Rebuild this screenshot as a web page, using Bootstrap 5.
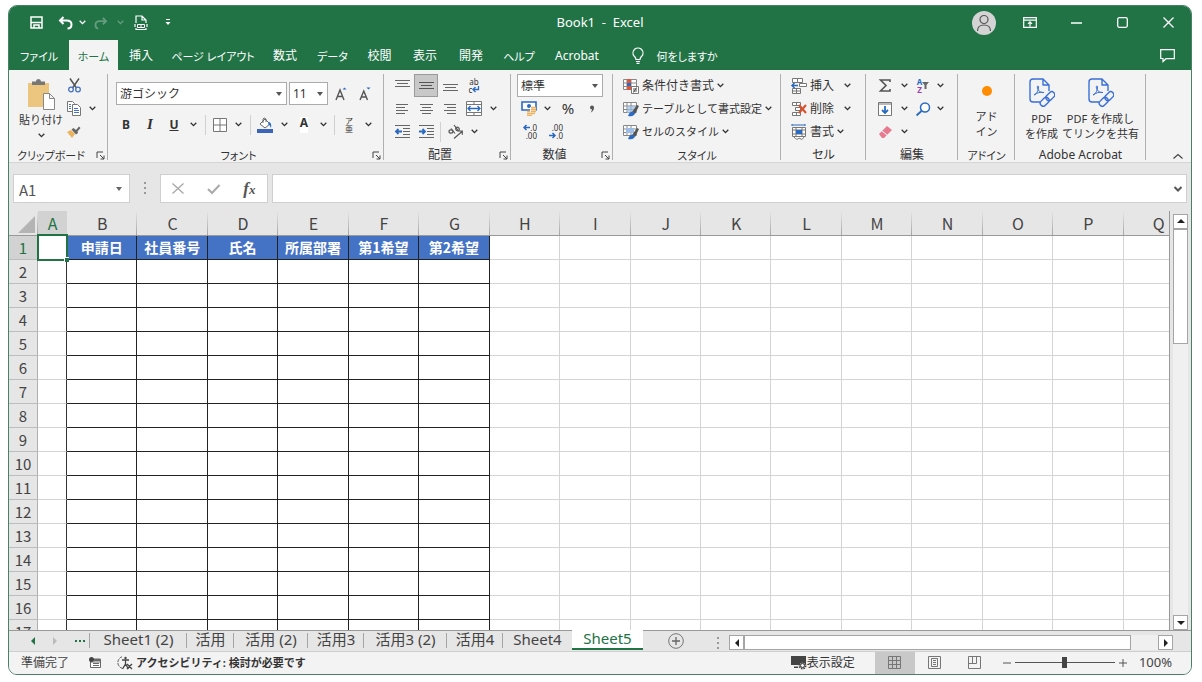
<!DOCTYPE html>
<html lang="ja">
<head>
<meta charset="utf-8">
<meta name="viewport" content="width=device-width, initial-scale=1">
<title>Book1 - Excel</title>
<link href="https://cdn.jsdelivr.net/npm/bootstrap@5.3.0/dist/css/bootstrap.min.css" rel="stylesheet">
<style>
:root{--green:#217346;--ink:#444;--line:#ababab}
body{font-family:"Noto Sans","Noto Sans CJK JP",sans-serif;font-size:12px;line-height:1;color:#333;font-feature-settings:"palt";padding:5px 10px 7px 8px;background:#fff}
svg{display:block;flex:none;overflow:visible}
.btn{--bs-btn-padding-x:0;--bs-btn-padding-y:0;--bs-btn-border-width:0;--bs-btn-border-radius:0;--bs-btn-font-size:12px;--bs-btn-line-height:1;--bs-btn-color:#333;display:flex;align-items:center;justify-content:center;white-space:nowrap}
.kana,.btn.kana{font-size:11px}
.app{border:1px solid #4a8068;border-radius:9px;background:#e6e6e6;overflow:hidden}
.app-head{background:var(--green);margin:-1px -1px 0;padding:0 1px;color:#fff}
.app-head .btn{--bs-btn-color:#fff;--bs-btn-hover-color:#fff}
.title-row{display:grid;grid-template-columns:1fr auto 1fr;height:35px}
.title-text{font-size:13px}
.quick{display:grid;grid-template-columns:38px 20px 14px 24px 14px 28px 26px;padding-left:8px}
.win-ctl{display:grid;grid-template-columns:46px 46px 46px 46px 46px;justify-content:end}
.avatar{width:24px;height:24px;background:#d4d4d4;border-radius:50%}
.ribbon-tabs{display:grid;grid-template-columns:60px 49px 46px 98px 46px 49px 45px 46px 46px 50px 66px 130px 1fr;height:30px}
.ribbon-tabs a{display:flex;align-items:center;justify-content:center;color:#fff;text-decoration:none;white-space:nowrap;padding:2px 0 0}
.ribbon-tabs a.active{background:#f3f3f3;color:var(--green)}
.ribbon{display:grid;grid-template-columns:99px 276px 127px 102px 168px 85px 92px 57px 131px 1fr;height:93px;background:#f3f3f3;border-bottom:1px solid #d5d5d5;padding-top:4px}
.group{display:flex;flex-direction:column;position:relative;min-width:0}
.group::after{content:"";position:absolute;right:0;top:0;bottom:3px;width:1px;background:#b0b0b0}
.group-body{height:69px}
.inset{padding-left:6px}
.inset-lg{padding-left:10px}
.group-foot{display:flex;align-items:center;height:20px;padding-top:4px;white-space:nowrap}
.group-foot span{flex:1;text-align:center}
.group-foot .btn{width:15px;height:14px}
.r3{display:grid;grid-auto-rows:23px;align-items:center}
.r3 .btn,.fmt .btn{height:23px}
.cmd{justify-content:start;gap:3px}
.bar{width:1px;height:20px;background:#d0d0d0;justify-self:center}
.fmt{display:grid;grid-template-columns:24px 24px 24px 14px 10px 20px 16px 8px 22px 16px 24px 14px 8px 22px 16px;align-items:center}
.al{grid-template-columns:24px 24px 24px 24px 14px}
.al3{display:grid;grid-template-columns:24px 24px 5px 25px 12px;grid-column:1/-1;align-items:center}
.nu{grid-template-columns:24px 12px 30px 18px}
.ed{grid-template-columns:22px 16px 22px 12px}
.ce{grid-template-columns:46px 20px}
.on{background:#c8c8c8;border:1px solid #9a9a9a!important}
.tiny{font-size:8px;line-height:8px}
.serif-i{font:italic bold 15px "Liberation Serif",serif}
.fx{font:italic bold 17px "Liberation Serif",serif;color:#555}
.fx i{font-size:13px}
.pick{-webkit-appearance:none;appearance:none;border:1px solid var(--line);border-radius:0;height:23px;padding:0 12px 0 3px;font-size:12px;line-height:1;color:#333;background:#fff url("data:image/svg+xml,%3Csvg xmlns='http://www.w3.org/2000/svg' viewBox='0 0 6 4'%3E%3Cpath fill='%23555' d='M0 0h6L3 4z'/%3E%3C/svg%3E") no-repeat right 4px center/6px 4px}
.pick-font{width:171px}.pick-size{width:39px;margin-left:2px}.pick-num{width:86px;grid-column:1/-1}
.two-line{line-height:15px}
.addin-dot{margin:8px 0 9px}
.formula{display:grid;grid-template-columns:117px 30px 108px 1fr;padding:11px 4px 0;height:49px}
.boxy{background:#fff;border:1px solid #cfcfcf;height:29px;border-radius:0}
.name-box{padding:2px 0 0 5px;font:15px "Noto Sans CJK JP",sans-serif;line-height:1;color:#555;width:102px;border:0;background:transparent}
.sheet{min-height:0;padding-right:1px}
.grid-view{overflow:hidden;border-right:1px solid #999;position:relative}
.cells{table-layout:fixed;width:calc(100% + 25px);border-collapse:separate;border-spacing:0;font-family:"Noto Sans CJK JP",sans-serif}
.cells th,.cells td{padding:0;height:24px;text-align:center;vertical-align:middle;border-right:1px solid #d4d4d4;border-bottom:1px solid #d4d4d4;background:#fff;font-weight:400;overflow:hidden}
.cells thead th{height:25px;background:linear-gradient(#e6e6e6,#a5a5a5) right/1px 100% no-repeat #e6e6e6;border-right:0;border-bottom-color:#999;font-size:16px;color:var(--ink)}
.cells tbody th{background:#e6e6e6;border-color:#bdbdbd;border-right-color:#b0b0b0;font-size:15px;color:var(--ink)}
.cells .cur{color:var(--green)!important;background:#d2d2d2!important}
.cells thead .cur{border-bottom-color:var(--green)}
.cells td.a{border-right-color:#333}
.cells td.d{border-color:#222}
.cells tr:first-child td.d{background:#4472c4;color:#fff;font-weight:700;font-size:14px;font-feature-settings:normal}
.cells td.sel{position:relative;overflow:visible;border-color:transparent}
.sel::before{content:"";position:absolute;inset:-2px -2px -2px -1px;border:2px solid var(--green)}
.sel::after{content:"";position:absolute;right:-3px;bottom:-3px;width:5px;height:5px;background:var(--green);border:1px solid #fff;border-width:1px 0 0 1px}
.corner{margin:5px 3px 2px auto}
.vscroll{width:20px;padding:3px 2px 0 3px}
.sbtn{border:1px solid #a5a5a5!important;background:#fff!important;height:15px;width:15px}
.vscroll .thumb{height:115px;background:#fff;border:1px solid #a5a5a5}
.track{background:#f0f0f0}
.sheets{display:grid;grid-template-columns:81px 97px 47px 74px 56px 83px 56px 69px 71px 66px 20px 1fr 18px;height:22px;border-top:1px solid #999;border-bottom:1px solid #cfcfcf;font-size:15px;color:var(--ink)}
.sheets a{color:var(--ink);text-decoration:none;display:flex;align-items:center;justify-content:center;height:17px;white-space:nowrap;padding:0;position:relative}
.sheets a::before{content:"";position:absolute;left:-1px;top:2px;height:15px;width:1px;background:#a5a5a5}
.sheets a.active{background:#fff;color:var(--green);height:20px;margin-top:-1px;padding-bottom:2px;border-bottom:2px solid var(--green)}
.sheets a.active::before{display:none}
.tab-nav{display:grid;grid-template-columns:4px 4px 12px;gap:18px;padding-left:22px;align-items:center}
.hscroll{display:grid;grid-template-columns:15px 1fr 27px 15px;padding-top:4px;height:19px}
.status{background:#f3f3f3;height:23px;color:#444}
.views{display:grid;grid-template-columns:40px 40px 40px}
.views .btn,.status .btn{height:22px}
.views .normal{background:#c8c8c8}
.zoomer{-webkit-appearance:none;appearance:none;width:100px;height:11px;margin:0;background:linear-gradient(#555,#555) center/100% 1px no-repeat}
.zoomer::-webkit-slider-thumb{-webkit-appearance:none;width:5px;height:11px;background:#444;border:0;border-radius:0}
.zoom-value{font-size:13px;padding:0 19px 0 8px}
</style>
</head>
<body class="vh-100 d-flex flex-column">
<svg width="0" height="0" class="position-absolute" aria-hidden="true">
  <symbol id="chev" viewBox="0 0 7 5"><path d="M.7.8 3.500 3.600 6.300.8" fill="none" stroke="currentColor" stroke-width="1.300"/></symbol>
  <symbol id="launch" viewBox="0 0 9 9"><path d="M1 7V1h6M4 4l4 4M8 4.500V8H4.500" fill="none" stroke="#444"/></symbol>
  <symbol id="pdf" viewBox="0 0 26 29"><g fill="none" stroke="#3a6fd8" stroke-width="1.400" stroke-linejoin="round"><path d="M11 24H4q-3 0-3-3V4q0-3 3-3h10l6 6v6M14 1v6h6"/><path d="M5 17c3-1 4.500-5 4.500-8 0-2-1.800-1-1 1 1 3 3 5 6.500 4.500-4-1-7 .5-10 2.500z" stroke-width="1"/><g transform="rotate(-45 18.500 21)"><rect x="9.500" y="18" width="10" height="6" rx="3"/><rect x="17.500" y="18" width="10" height="6" rx="3"/></g></g></symbol>
  <symbol id="tbl" viewBox="0 0 16 16"><path d="M.5 1.500h13v10H.5zM.5 5h13M.5 8.500h13M4 1v10M8 1v10" fill="#fff" stroke="#888"/></symbol>
</svg>

<main class="app flex-fill d-flex flex-column">
<header class="app-head">
  <div class="title-row">
    <div class="quick">
      <button class="btn" aria-label="上書き保存"><svg width="13" height="13" viewBox="0 0 13 13"><path d="M1 1h11v11H1z" fill="none" stroke="#fff" stroke-width="1.500"/><path d="M1 6.500h11M4 12V9h5v3" fill="none" stroke="#fff" stroke-width="1.500"/></svg></button>
      <button class="btn" aria-label="元に戻す"><svg width="15" height="13" viewBox="0 0 15 13"><path d="M5.500 1 2 4.500 5.500 8M2 4.500h6.500q5 0 5 4t-4 4" fill="none" stroke="#fff" stroke-width="2"/></svg></button>
      <button class="btn" aria-label="元に戻す一覧"><svg width="7" height="5"><use href="#chev"/></svg></button>
      <button class="btn" aria-label="やり直し"><svg width="14" height="12" viewBox="0 0 15 13" opacity=".3"><path d="M9.500 1 13 4.500 9.500 8M13 4.500H6.500q-5 0-5 4t3 4" fill="none" stroke="#fff" stroke-width="2"/></svg></button>
      <button class="btn" aria-label="やり直し一覧"><svg width="7" height="5" opacity=".3"><use href="#chev"/></svg></button>
      <button class="btn" aria-label="印刷プレビュー"><svg width="12" height="15" viewBox="0 0 12 15"><path d="M1 8V1h6l4 4v3M7 1v4h4M0 9v3M12 9v3M1 13v1.500h10V13" fill="none" stroke="#fff" stroke-width="1.200"/><path d="M2.500 9.500h7v3h-7zM5 11h2" fill="none" stroke="#fff"/></svg></button>
      <button class="btn" aria-label="カスタマイズ"><svg width="6" height="7" viewBox="0 0 6 7"><path d="M1 .5h4" stroke="#fff"/><path d="M.5 3h5L3 6z" fill="#fff"/></svg></button>
    </div>
    <div class="title-text align-self-center text-nowrap">Book1 &nbsp;- &nbsp;Excel</div>
    <div class="win-ctl">
      <button class="btn" aria-label="アカウント"><span class="avatar d-flex align-items-center justify-content-center"><svg width="16" height="18" viewBox="0 0 16 18"><circle cx="8" cy="5.500" r="4" fill="none" stroke="#555" stroke-width="1.200"/><path d="M1.500 17q0-6 6.500-6t6.500 6" fill="none" stroke="#555" stroke-width="1.200"/></svg></span></button>
      <button class="btn" aria-label="リボンの表示オプション"><svg width="14" height="11" viewBox="0 0 14 11"><path d="M.7.700h12.600v9.600H.7zM1 3.200h12M7 9.500V5M5 6.800 7 4.800l2 2" fill="none" stroke="#fff" stroke-width="1.200"/></svg></button>
      <button class="btn" aria-label="最小化"><svg width="11" height="2"><path d="M0 1h11" stroke="#fff" stroke-width="1.300"/></svg></button>
      <button class="btn" aria-label="最大化"><svg width="11" height="11"><rect x=".7" y=".7" width="9.600" height="9.600" rx="1.500" fill="none" stroke="#fff" stroke-width="1.300"/></svg></button>
      <button class="btn" aria-label="閉じる"><svg width="11" height="11"><path d="m.5.500 10 10m0-10-10 10" stroke="#fff" stroke-width="1.300"/></svg></button>
    </div>
  </div>
  <nav class="ribbon-tabs">
    <a href="#" class="kana">ファイル</a><a href="#" class="active kana">ホーム</a><a href="#">挿入</a><a href="#" class="kana">ページ レイアウト</a><a href="#">数式</a><a href="#" class="kana">データ</a><a href="#">校閲</a><a href="#">表示</a><a href="#">開発</a><a href="#" class="kana">ヘルプ</a><a href="#">Acrobat</a>
    <a href="#" class="kana gap-2"><svg class="me-1" width="12" height="16" viewBox="0 0 12 16"><path d="M4 11.500q0-2-2-3.500a5 5 0 1 1 8 0q-2 1.500-2 3.500zM4 13.500h4M4.500 15.300h3" fill="none" stroke="#fff" stroke-width="1.200"/></svg>何をしますか</a>
    <button class="btn ms-auto me-3" aria-label="コメント"><svg width="15" height="13" viewBox="0 0 15 13"><path d="M.7.700h13.600v9H6L3 12.500v-3H.7z" fill="none" stroke="#fff" stroke-width="1.200"/></svg></button>
  </nav>
</header>

<section class="ribbon" aria-label="リボン">
  <div class="group">
    <div class="group-body d-flex">
      <button class="btn kana flex-column inset-lg"><svg width="29" height="31" viewBox="0 0 29 31"><path d="M1 4h21v24H1z" fill="#ecc57f"/><path d="M5 2.500h4a2.500 2.500 0 0 1 5 0h4V6H5z" fill="#777"/><path d="M16.500 14.500h6l5 5v11h-11zM22.500 14.500v5h5" fill="#fff" stroke="#888"/></svg><span class="mt-1">貼り付け</span><svg class="mt-2" width="7" height="5"><use href="#chev"/></svg></button>
      <div class="r3" style="grid-template-columns:22px 14px">
        <button class="btn" aria-label="切り取り"><svg width="13" height="15" viewBox="0 0 13 15"><path d="m2 .5 6.500 9.500M11 .5 4.500 10" stroke="#555" stroke-width="1.500"/><g fill="none" stroke="#4472c4" stroke-width="1.300"><circle cx="3" cy="11.500" r="2.300"/><circle cx="10" cy="11.500" r="2.300"/></g></svg></button><i></i>
        <button class="btn" aria-label="コピー"><svg width="14" height="15" viewBox="0 0 14 15"><path d="M.5.500h5l2 2v8h-7z" fill="#fff" stroke="#777"/><path d="M5.500 3.500h5l3 3v8h-8z" fill="#fff" stroke="#777"/><path d="M7 7.500h4M7 9.500h5M7 11.500h5M2 3.500h2M2 5.500h2M2 7.500h2" stroke="#4472c4"/></svg></button>
        <button class="btn" aria-label="コピー一覧"><svg width="7" height="5"><use href="#chev"/></svg></button>
        <button class="btn" aria-label="書式のコピー"><svg width="14" height="12" viewBox="0 0 14 12"><path d="m0 6 4-2 4 4-3 4z" fill="#ecb25c"/><path d="m4.500 3.500 2-1.500L9 4l3-3.500L13.500 2l-3 3.500L11 7 9 8.500z" fill="#666"/></svg></button><i></i>
      </div>
    </div>
    <div class="group-foot kana"><span>クリップボード</span><button class="btn" aria-label="クリップボードの詳細"><svg width="9" height="9"><use href="#launch"/></svg></button></div>
  </div>

  <div class="group">
    <div class="group-body">
      <div class="d-flex ps-2 pt-2">
        <select class="pick pick-font" aria-label="フォント"><option>游ゴシック</option></select>
        <select class="pick pick-size" aria-label="フォント サイズ"><option>11</option></select>
        <button class="btn" style="width:26px" aria-label="フォント サイズの拡大"><svg width="13" height="15" viewBox="0 0 13 15"><path d="M1 14 5 4l4 10M2.500 10.500h5" fill="none" stroke="#555" stroke-width="1.400"/><path d="M7.500 3.500 9.500 1.500l2 2z" fill="#2a6ac0"/></svg></button>
        <button class="btn" style="width:22px" aria-label="フォント サイズの縮小"><svg width="13" height="15" viewBox="0 0 13 15"><path d="M1 14 4.800 5l3.700 9M2.500 11h4.500" fill="none" stroke="#555" stroke-width="1.400"/><path d="M7.500 1.500h4l-2 2z" fill="#2a6ac0"/></svg></button>
      </div>
      <div class="fmt mt-2 inset">
        <button class="btn fw-bold">B</button>
        <button class="btn"><span class="serif-i">I</span></button>
        <button class="btn fw-bold text-decoration-underline">U</button>
        <button class="btn" aria-label="下線一覧"><svg width="7" height="5"><use href="#chev"/></svg></button>
        <span class="bar"></span>
        <button class="btn" aria-label="罫線"><svg width="14" height="14"><path d="M.5.500h13v13H.5zM7 .5v13M.5 7h13" fill="#fff" stroke="#777"/></svg></button>
        <button class="btn" aria-label="罫線一覧"><svg width="7" height="5"><use href="#chev"/></svg></button>
        <span class="bar"></span>
        <button class="btn" aria-label="塗りつぶしの色"><svg width="16" height="16" viewBox="0 0 16 16"><path d="m3 7 5-5 5 5-5 4z" fill="#fff" stroke="#666"/><path d="M6 6V2q1-2 3 0v3" fill="none" stroke="#666"/><path d="M12 5q3 1 2 6-1-3-3-4z" fill="#2a6ac0"/><path d="M0 12h16v4H0z" fill="#3a64b8"/></svg></button>
        <button class="btn" aria-label="塗りつぶし一覧"><svg width="7" height="5"><use href="#chev"/></svg></button>
        <button class="btn fw-bold"><span class="bg-white pb-1">A</span></button>
        <button class="btn" aria-label="文字色一覧"><svg width="7" height="5"><use href="#chev"/></svg></button>
        <span class="bar"></span>
        <button class="btn flex-column tiny" aria-label="ふりがな"><span>ア</span><span>亜</span></button>
        <button class="btn" aria-label="ふりがな一覧"><svg width="7" height="5"><use href="#chev"/></svg></button>
      </div>
    </div>
    <div class="group-foot kana"><span>フォント</span><button class="btn" aria-label="フォントの詳細"><svg width="9" height="9"><use href="#launch"/></svg></button></div>
  </div>

  <div class="group">
    <div class="group-body r3 al inset">
      <button class="btn pb-1" aria-label="上揃え"><svg width="15" height="8"><path d="M0 .5h15M2 3.500h11M0 6.500h15" stroke="#666"/></svg></button>
      <button class="btn on" aria-label="上下中央揃え"><svg width="15" height="8"><path d="M0 .5h15M2 3.500h11M0 6.500h15" stroke="#555"/></svg></button>
      <button class="btn pt-1" aria-label="下揃え"><svg width="15" height="8"><path d="M0 .5h15M2 3.500h11M0 6.500h15" stroke="#666"/></svg></button>
      <button class="btn flex-column tiny" aria-label="折り返して全体を表示する"><span>ab</span><span class="d-flex">c<svg width="7" height="7"><path d="M6.500 0v3.500h-5M3.500 1 1 3.500 3.500 6" fill="none" stroke="#2a6ac0" stroke-width="1.300"/></svg></span></button><i></i>
      <button class="btn" aria-label="左揃え"><svg width="12" height="10"><path d="M0 .5h12M0 3.500h9M0 6.500h12M0 9.500h9" stroke="#666"/></svg></button>
      <button class="btn" aria-label="中央揃え"><svg width="13" height="10"><path d="M0 .5h13M2 3.500h9M0 6.500h13M2 9.500h9" stroke="#666"/></svg></button>
      <button class="btn" aria-label="右揃え"><svg width="12" height="10"><path d="M0 .5h12M3 3.500h9M0 6.500h12M3 9.500h9" stroke="#666"/></svg></button>
      <button class="btn" aria-label="セルを結合して中央揃え"><svg width="16" height="15"><path d="M.5.500h15v14H.5zM.5 3.500h15M.5 11.500h15M8 .5v3M8 11.500v3" fill="#fff" stroke="#777"/><path d="M2 7.500h12M4.500 5 2 7.500 4.500 10M11.500 5 14 7.500 11.500 10" fill="none" stroke="#2a6ac0" stroke-width="1.300"/></svg></button>
      <button class="btn" aria-label="結合一覧"><svg width="7" height="5"><use href="#chev"/></svg></button>
      <div class="al3">
        <button class="btn" aria-label="インデントを減らす"><svg width="15" height="13"><path d="M0 .5h15M8 3.500h7M8 6.500h7M8 9.500h7M0 12.500h15" stroke="#666"/><path d="M1 6.500h6M3.500 4 1 6.500 3.500 9" fill="none" stroke="#2a6ac0" stroke-width="1.800"/></svg></button>
        <button class="btn" aria-label="インデントを増やす"><svg width="15" height="13"><path d="M0 .5h15M8 3.500h7M8 6.500h7M8 9.500h7M0 12.500h15" stroke="#666"/><path d="M0 6.500h6M3.500 4 6 6.500 3.500 9" fill="none" stroke="#2a6ac0" stroke-width="1.800"/></svg></button>
        <span class="bar"></span>
        <button class="btn" aria-label="方向"><svg width="16" height="14" viewBox="0 0 16 14"><g fill="none" stroke="#555" stroke-width="1.200"><ellipse cx="3" cy="6.500" rx="2" ry="1.700"/><path d="m3 3.500 4 5M6 0l4.500 6"/><ellipse cx="9.500" cy="4" rx="1.600" ry="2" transform="rotate(-40 9.500 4)"/><path d="m6 13.500 8-7M10.500 6h3.800v3.800"/></g></svg></button>
        <button class="btn" aria-label="方向一覧"><svg width="7" height="5"><use href="#chev"/></svg></button>
      </div>
    </div>
    <div class="group-foot"><span>配置</span><button class="btn" aria-label="配置の詳細"><svg width="9" height="9"><use href="#launch"/></svg></button></div>
  </div>

  <div class="group">
    <div class="group-body r3 nu inset">
      <select class="pick pick-num" aria-label="表示形式"><option>標準</option></select>
      <button class="btn" aria-label="通貨表示形式"><svg width="16" height="15" viewBox="0 0 16 15"><path d="M1 1h14v8H1z" fill="#fff" stroke="#2a6ac0" stroke-width="1.600"/><circle cx="8" cy="5" r="2" fill="#2a6ac0"/><path d="M9 6h6v8H5v-4h4z" fill="#f3f3f3"/><path d="M10 6.500h5M10 8.500h5M10 10.500h5M6 12.500h8M6 10.500h3M6 14.300h5" stroke="#ecb25c" stroke-width="1.300"/></svg></button>
      <button class="btn" aria-label="通貨一覧"><svg width="7" height="5"><use href="#chev"/></svg></button>
      <button class="btn" style="--bs-btn-font-size:15px">%</button>
      <button class="btn" aria-label="桁区切りスタイル"><svg width="6" height="8"><path d="M1 2.500a2 2 0 1 1 4 0Q5 6 1.500 7.500 3 6 3 4.500 1 4.500 1 2.500z" fill="#555"/></svg></button>
      <button class="btn flex-column align-items-end tiny pe-1" aria-label="小数点以下の表示桁数を増やす"><span class="d-flex"><svg width="7" height="7"><path d="M7 3.500H1M3.500 1 1 3.500 3.500 6" fill="none" stroke="#2a6ac0" stroke-width="1.500"/></svg>.0</span><span>.00</span></button>
      <button class="btn flex-column align-items-end tiny pe-1" style="grid-column:span 2;width:26px" aria-label="小数点以下の表示桁数を減らす"><span>.00</span><span class="d-flex"><svg width="7" height="7"><path d="M0 3.500h6M3.500 1 6 3.500 3.500 6" fill="none" stroke="#2a6ac0" stroke-width="1.500"/></svg>.0</span></button>
    </div>
    <div class="group-foot"><span>数値</span><button class="btn" aria-label="数値の詳細"><svg width="9" height="9"><use href="#launch"/></svg></button></div>
  </div>

  <div class="group">
    <div class="group-body r3 inset-lg">
      <button class="btn cmd"><svg width="16" height="16"><use href="#tbl"/><path d="M4 1h4v4H4zM4 8h4v4H4z" fill="#d9573b"/><path d="M4 5h4v3H4z" fill="#2a6ac0"/><path d="M8.500 8.500h7v7h-7z" fill="#fff" stroke="#777"/><path d="M10 11h4M10 13h4M13.500 9.500l-3 5" stroke="#555"/></svg>条件付き書式<svg width="7" height="5"><use href="#chev"/></svg></button>
      <button class="btn cmd kana"><svg width="16" height="16"><use href="#tbl"/><path d="M4 5h10v7H4z" fill="#9dbde6" opacity=".7"/><path d="m9 11 5-7 2 1-4 8z" fill="#555"/><path d="M5 15q2-5 5-4 3 1 1 3-2 2-6 1z" fill="#2a6ac0"/></svg>テーブルとして書式設定<svg width="7" height="5"><use href="#chev"/></svg></button>
      <button class="btn cmd kana"><svg width="16" height="16"><use href="#tbl"/><path d="M3 4h8v5H3z" fill="#9dbde6"/><path d="m9 11 5-7 2 1-4 8z" fill="#555"/><path d="M5 15q2-5 5-4 3 1 1 3-2 2-6 1z" fill="#2a6ac0"/></svg>セルのスタイル<svg width="7" height="5"><use href="#chev"/></svg></button>
    </div>
    <div class="group-foot kana"><span>スタイル</span></div>
  </div>

  <div class="group">
    <div class="group-body r3 ce inset-lg">
      <button class="btn cmd"><svg width="16" height="16"><path d="M1.500.500h10v4h-10zM6.500.5v4M1.500 10.500h8v5h-8zM5.500 10.500v5M1.500 13h8" fill="#fff" stroke="#777"/><path d="M8.500 5.500h7v3h-7z" fill="#fff" stroke="#777"/><path d="M7 7.500H1M3.500 5 1 7.500 3.500 10" fill="none" stroke="#2a6ac0" stroke-width="1.500"/></svg>挿入</button><button class="btn" aria-label="挿入一覧"><svg width="7" height="5"><use href="#chev"/></svg></button>
      <button class="btn cmd"><svg width="16" height="16"><path d="M1.500 1.500h8v3h-8zM5.500 1.500v3M4.500 6.500h5v3h-5zM1.500 11.500h8v3h-8zM5.500 11.500v3" fill="#fff" stroke="#777"/><path d="m8 4 7 8m0-8-7 8" stroke="#d94f2b" stroke-width="2"/></svg>削除</button><button class="btn" aria-label="削除一覧"><svg width="7" height="5"><use href="#chev"/></svg></button>
      <button class="btn cmd"><svg width="16" height="16"><path d="M1 1h13M1 0v2M14 0v2" stroke="#2a6ac0"/><path d="M1.500 3.500h13v9h-13zM1.500 6h13M1.500 10h13M5 3.500v9M11 3.500v9M3 13q3 4 5 1l3 1.500 2-2.500" fill="#fff" stroke="#777"/><path d="M5 6h6v4H5z" fill="#2a6ac0"/></svg>書式</button><button class="btn justify-content-start" aria-label="書式一覧"><svg width="7" height="5"><use href="#chev"/></svg></button>
    </div>
    <div class="group-foot"><span>セル</span></div>
  </div>

  <div class="group">
    <div class="group-body r3 ed ps-2">
      <button class="btn" aria-label="オート SUM"><svg width="12" height="13"><path d="M11 3V1H1.500L7 6.500 1.500 12H11v-2" fill="none" stroke="#555" stroke-width="1.600"/></svg></button>
      <button class="btn" aria-label="SUM 一覧"><svg width="7" height="5"><use href="#chev"/></svg></button>
      <button class="btn tiny" aria-label="並べ替えとフィルター"><span class="d-flex flex-column fw-bold"><span style="color:#2a6ac0">A</span><span style="color:#9a3fb0">Z</span></span><svg width="7" height="7"><path d="M0 0h7L4.500 3v4h-2V3z" fill="#666"/></svg></button>
      <button class="btn" aria-label="並べ替え一覧"><svg width="7" height="5"><use href="#chev"/></svg></button>
      <button class="btn" aria-label="フィル"><svg width="14" height="14"><path d="M.5.500h13v13H.5z" fill="#fff" stroke="#777"/><path d="M.5 2h13" stroke="#777"/><path d="M7 4v7M4 8l3 3 3-3" fill="none" stroke="#2a6ac0" stroke-width="1.800"/></svg></button>
      <button class="btn" aria-label="フィル一覧"><svg width="7" height="5"><use href="#chev"/></svg></button>
      <button class="btn" aria-label="検索と選択"><svg width="15" height="14"><circle cx="9" cy="5.500" r="4.500" fill="#fff" stroke="#2a6ac0" stroke-width="1.500"/><path d="m5.500 9-5 4.500" stroke="#2a6ac0" stroke-width="1.800"/></svg></button>
      <button class="btn" aria-label="検索一覧"><svg width="7" height="5"><use href="#chev"/></svg></button>
      <button class="btn" aria-label="クリア"><svg width="13" height="12"><path d="m0 8 8-8 5 4-8 8H3z" fill="#e87a90"/><path d="m3 5 5 4" stroke="#fff"/></svg></button>
      <button class="btn" aria-label="クリア一覧"><svg width="7" height="5"><use href="#chev"/></svg></button>
    </div>
    <div class="group-foot"><span>編集</span></div>
  </div>

  <div class="group">
    <div class="group-body d-flex justify-content-center">
      <button class="btn kana flex-column justify-content-start"><svg class="addin-dot" width="14" height="18"><circle cx="7" cy="9" r="5" fill="#ff8c00"/></svg><span class="two-line">アド<br>イン</span></button>
    </div>
    <div class="group-foot kana"><span>アドイン</span></div>
  </div>

  <div class="group">
    <div class="group-body d-flex inset-lg pe-2 gap-1">
      <button class="btn kana flex-column justify-content-start pt-1" style="width:36px"><svg class="mb-1" width="26" height="29"><use href="#pdf"/></svg><span class="two-line">PDF<br>を作成</span></button>
      <button class="btn kana flex-column justify-content-start pt-1 flex-fill"><svg class="mb-1" width="26" height="29"><use href="#pdf"/></svg><span class="two-line">PDF を作成し<br>てリンクを共有</span></button>
    </div>
    <div class="group-foot"><span>Adobe Acrobat</span></div>
  </div>
  <button class="btn align-self-end ms-auto me-2 pb-1" aria-label="リボンを折りたたむ"><svg width="10" height="6"><path d="m.5 5.500 4.500-4 4.500 4" fill="none" stroke="#444" stroke-width="1.200"/></svg></button>
</section>

<section class="formula" aria-label="数式バー">
  <div class="boxy d-flex align-items-center"><input class="name-box" aria-label="名前ボックス" value="A1"><svg width="6" height="4"><path d="M0 0h6L3 4z" fill="#666"/></svg></div>
  <svg class="mx-auto mt-2" width="2" height="12"><path d="M0 1h2M0 6h2M0 11h2" stroke="#999" stroke-width="2"/></svg>
  <div class="boxy d-flex align-items-center justify-content-around">
    <button class="btn" aria-label="キャンセル"><svg width="12" height="11"><path d="m.5.500 11 10m0-10-11 10" stroke="#aaa" stroke-width="1.400"/></svg></button>
    <button class="btn" aria-label="入力"><svg width="13" height="10"><path d="m1 5 4 4 7.500-8" fill="none" stroke="#aaa" stroke-width="2"/></svg></button>
    <button class="btn" aria-label="関数の挿入"><span class="fx">f<i>x</i></span></button>
  </div>
  <div class="boxy d-flex align-items-center ms-1 pe-1"><input class="border-0 flex-fill bg-transparent" aria-label="数式"><svg width="8" height="6"><path d="m.5 1 3.500 3.500L7.500 1" fill="none" stroke="#555" stroke-width="2"/></svg></div>
</section>

<section class="sheet flex-fill d-flex">
  <div class="grid-view flex-fill">
    <table class="cells" aria-label="Sheet5">
      <colgroup id="cols"></colgroup>
      <thead><tr id="letters"></tr></thead>
      <tbody id="rows"></tbody>
    </table>
  </div>
  <div class="vscroll d-flex flex-column">
    <button class="btn sbtn" aria-label="上へ"><svg width="8" height="4"><path d="M0 4h8L4 0z" fill="#222"/></svg></button>
    <div class="thumb"></div><div class="track flex-fill"></div>
    <button class="btn sbtn" aria-label="下へ"><svg width="8" height="4"><path d="M0 0h8L4 4z" fill="#222"/></svg></button>
  </div>
</section>

<nav class="sheets" aria-label="シート">
  <div class="tab-nav"><svg width="4" height="8"><path d="M4 0v8L0 4z" fill="#217346"/></svg><svg width="4" height="8"><path d="M0 0v8l4-4z" fill="#bbb"/></svg><svg width="10" height="2"><path d="M0 1h2M4 1h2M8 1h2" stroke="#217346" stroke-width="2"/></svg></div>
  <a href="#">Sheet1 (2)</a><a href="#">活用</a><a href="#">活用 (2)</a><a href="#">活用3</a><a href="#">活用3 (2)</a><a href="#">活用4</a><a href="#">Sheet4</a><a href="#" class="active">Sheet5</a>
  <button class="btn" aria-label="新しいシート"><svg width="16" height="16"><circle cx="8" cy="8" r="7.300" fill="none" stroke="#777"/><path d="M8 4v8M4 8h8" stroke="#666" stroke-width="1.300"/></svg></button>
  <svg class="mt-1 ms-2" width="2" height="15"><path d="M0 3h2M0 8h2M0 13h2" stroke="#999" stroke-width="2"/></svg>
  <div class="hscroll"><button class="btn sbtn" aria-label="左へ"><svg width="4" height="8"><path d="M4 0v8L0 4z" fill="#222"/></svg></button><div class="sbtn w-100"></div><div class="track"></div><button class="btn sbtn" aria-label="右へ"><svg width="4" height="8"><path d="M0 0v8l4-4z" fill="#222"/></svg></button></div>
</nav>

<footer class="status d-flex align-items-center">
  <span class="ms-2 ps-1">準備完了</span>
  <button class="btn ms-3 ps-1" aria-label="マクロの記録"><svg width="12" height="11"><path d="M1.500 2.500h10v8h-10zM1.500 5h10M4 6.500h6M4 8.500h6" fill="#fff" stroke="#666"/><path d="M4.500 1.500h7V4h-7z" fill="#666"/><circle cx="2.500" cy="2.500" r="2.500" fill="#444"/></svg></button>
  <button class="btn kana fw-bold ms-3"><svg class="me-1" width="15" height="14"><path d="M5 .8a6 6 0 0 0 0 11.400" fill="none" stroke="#555" stroke-dasharray="3 1"/><path d="M5 4h7M8.500 4v4l-3 5M8.500 8l3 5M10 8l5 5m0-5-5 5" fill="none" stroke="#444" stroke-width="1.300"/><circle cx="8.500" cy="2" r="1.200" fill="#444"/></svg>アクセシビリティ: 検討が必要です</button>
  <button class="btn ms-auto me-3"><svg width="16" height="15"><path d="M0 1h15v9H0zM3 11.500h4v1.500H3z" fill="#444"/><circle cx="11.500" cy="10.500" r="3" fill="#f3f3f3" stroke="#444" stroke-width="2" stroke-dasharray="1.500 .8"/><circle cx="11.500" cy="10.500" r="2" fill="none" stroke="#444"/></svg><span class="me-1">表示設定</span></button>
  <div class="views">
    <button class="btn normal" aria-label="標準"><svg width="13" height="13"><path d="M.5.500h12v12H.5zM4.500.500v12M8.500.500v12M.5 4.500h12M.5 8.500h12" fill="none" stroke="#777"/></svg></button>
    <button class="btn" aria-label="ページ レイアウト"><svg width="13" height="13"><path d="M.5.500h12v12H.5zM3.500 2.500h6v8h-6zM5 4.500h3M5 6.500h3M5 8.500h3" fill="none" stroke="#777"/></svg></button>
    <button class="btn" aria-label="改ページ プレビュー"><svg width="13" height="13"><path d="M.5.500h12v12H.5zM.5 7.500h8v-7M4.500.500v7" fill="none" stroke="#777"/></svg></button>
  </div>
  <button class="btn ms-2 me-1" aria-label="縮小"><svg width="8" height="8"><path d="M0 4h8" stroke="#555"/></svg></button>
  <input type="range" class="zoomer" aria-label="ズーム" value="50">
  <button class="btn ms-1 me-1" aria-label="拡大"><svg width="8" height="8"><path d="M0 4h8M4 0v8" stroke="#555"/></svg></button>
  <span class="zoom-value">100%</span>
</footer>
</main>

<script src="https://cdn.jsdelivr.net/npm/bootstrap@5.3.0/dist/js/bootstrap.bundle.min.js"></script>
<script>
const letters = [...'ABCDEFGHIJKLMNOPQ'];
const heads = {B:'申請日', C:'社員番号', D:'氏名', E:'所属部署', F:'第1希望', G:'第2希望'};
document.getElementById('cols').innerHTML = '<col style="width:29px"><col style="width:29px">' + '<col>'.repeat(16);
document.getElementById('letters').innerHTML =
  '<th><svg class="corner" width="17" height="17"><path d="M17 0v17H0z" fill="#b4b4b4"/></svg></th>' +
  letters.map(l => `<th class="${l === 'A' ? 'cur' : ''}">${l}</th>`).join('');
let html = '';
for (let r = 1; r <= 17; r++) {
  html += `<tr><th class="${r === 1 ? 'cur' : ''}">${r}</th>` + letters.map(l => {
    const c = l === 'A' ? (r === 1 ? 'sel' : 'a') : (heads[l] ? 'd' : '');
    return `<td class="${c}">${r === 1 && heads[l] ? heads[l] : ''}</td>`;
  }).join('') + '</tr>';
}
document.getElementById('rows').innerHTML = html;
</script>
</body>
</html>
